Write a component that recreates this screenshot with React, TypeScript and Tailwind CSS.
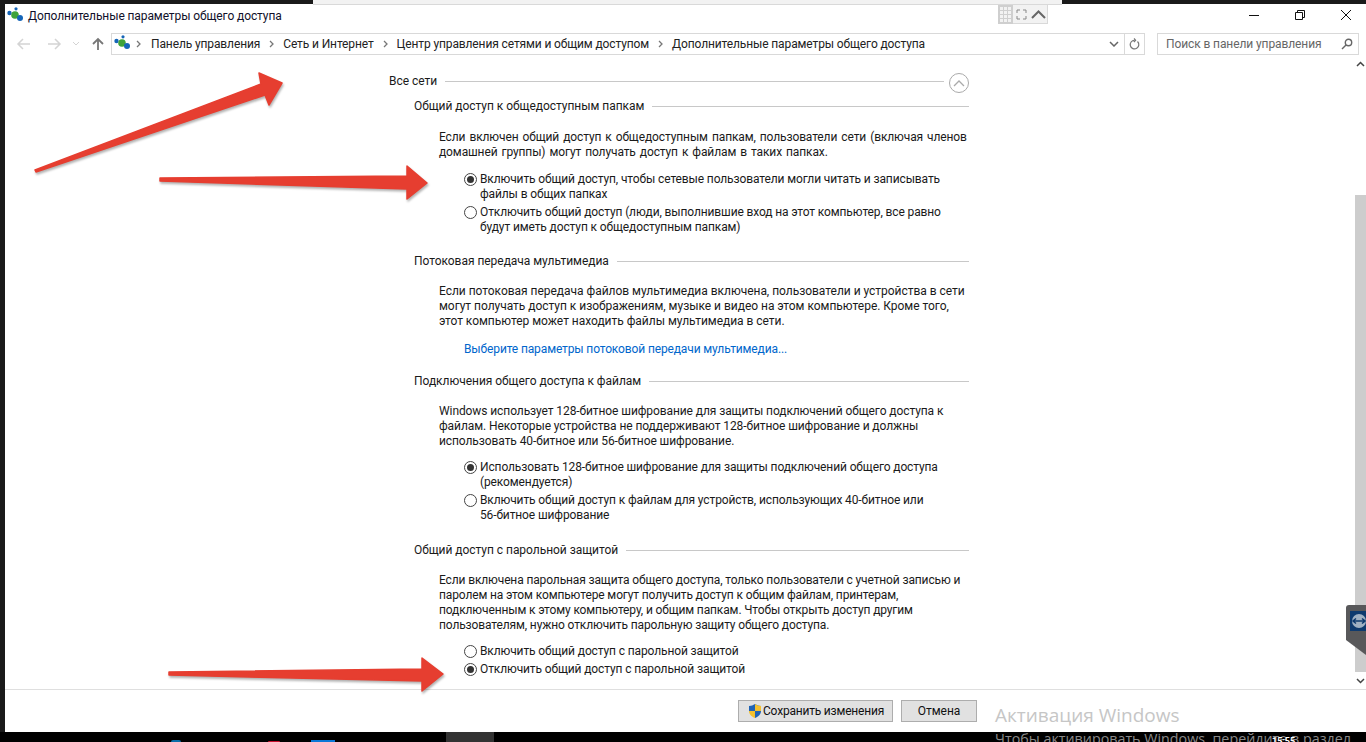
const font = "font-['Roboto','Noto_Sans',sans-serif]";

function NetIcon({ className }: { className?: string }) {
  return (
    <svg viewBox="0 0 16 16" className={className}>
      <circle cx="2.5" cy="6" r="2.2" fill="#1565b8" />
      <circle cx="9" cy="1.8" r="1.6" fill="#1565b8" />
      <circle cx="8" cy="8" r="3.8" fill="#3fa33a" />
      <circle cx="13" cy="11" r="3" fill="#1565b8" />
    </svg>
  );
}

function Heading({ children, big }: { children: string; big?: boolean }) {
  return (
    <div className={`flex items-center gap-[8px] h-[15px] tracking-[-0.04px] ${big ? "" : "ml-[25px]"}`}>
      <span className="whitespace-nowrap">{children}</span>
      <div className={`flex-1 h-px bg-[#c8c8c8] ${big ? "mr-[25px]" : ""}`} />
    </div>
  );
}

function Radio({ checked, children }: { checked?: boolean; children: React.ReactNode }) {
  return (
    <div className="flex ml-[75px]">
      <div className="w-[13px] h-[13px] mt-px rounded-full border border-[#444] bg-white flex items-center justify-center shrink-0">
        {checked && <div className="w-[7px] h-[7px] rounded-full bg-[#333]" />}
      </div>
      <div className="ml-[3px] whitespace-nowrap tracking-[-0.12px]">{children}</div>
    </div>
  );
}

function Arrows() {
  return (
    <svg className="absolute left-0 top-0 pointer-events-none" width="1366" height="742" viewBox="0 0 1366 742">
      <g fill="#e63e30" stroke="#e63e30" strokeWidth="1.5" strokeLinejoin="round" style={{ filter: "drop-shadow(1px 2px 1px rgba(0,0,0,0.3))" }}>
        <polygon points="35,170 261,84 259,73 282,83 269,105 265,95 36,172" />
        <polygon points="160,178 407,176 407,166 427,183 407,199 407,189 160,181" />
        <polygon points="169,672 422,669 422,658 443,674 422,691 422,681 169,675" />
      </g>
    </svg>
  );
}

const crumbs = ["Панель управления", "Сеть и Интернет", "Центр управления сетями и общим доступом", "Дополнительные параметры общего доступа"];

export default function App() {
  return (
    <div className={`relative w-[1366px] h-[742px] overflow-hidden bg-black text-[12px] leading-[15px] text-[#1a1a1a] ${font}`}>
      <div className="flex flex-col h-[732px] bg-[#1a1a1a] pt-[4px] pl-[5px]">
        <div className="flex flex-col flex-1 bg-white min-h-0">
          {/* title bar */}
          <div className="flex items-center h-[24px] shrink-0 pl-[2px]">
            <NetIcon className="w-[16px] h-[16px] -mt-[3px]" />
            <span className="ml-[5px] text-[#10102a] tracking-[-0.1px]">Дополнительные параметры общего доступа</span>
            <div className="flex-1" />
            <div className="flex items-center gap-[16px] pr-[5px] -mt-[2px]">
              <svg width="30" height="12" viewBox="0 0 30 12"><path d="M10 6.500h10" stroke="#111" fill="none" /></svg>
              <svg width="30" height="12" viewBox="0 0 30 12" fill="none" stroke="#111"><path d="M10.500 3.500h7v7h-7zM12.500 3.500v-2h7v7h-2" /></svg>
              <svg width="30" height="12" viewBox="0 0 30 12" fill="none" stroke="#111"><path d="M10 1l10 10M20 1L10 11" /></svg>
            </div>
          </div>
          {/* nav bar */}
          <div className="flex items-center h-[22px] mt-[5px] shrink-0 text-[#333]">
            <div className="flex items-center w-[106px] shrink-0 pl-[11px] text-[#d4d4d4]">
              <svg width="16" height="14" viewBox="0 0 16 14" fill="none" stroke="currentColor" strokeWidth="1.5"><path d="M14 7H2M7 2L2 7l5 5" /></svg>
              <svg className="ml-[14px]" width="16" height="14" viewBox="0 0 16 14" fill="none" stroke="currentColor" strokeWidth="1.5"><path d="M2 7h12M9 2l5 5-5 5" /></svg>
              <svg className="ml-[10px]" width="8" height="6" viewBox="0 0 8 6" fill="none" stroke="currentColor"><path d="M1 1l3 3 3-3" /></svg>
              <svg className="ml-[11px]" width="14" height="14" viewBox="0 0 14 14" fill="none" stroke="#777" strokeWidth="1.8"><path d="M7 13V2M2 7l5-5 5 5" /></svg>
            </div>
            <div className="flex items-center w-[1034px] h-[22px] border border-[#d9d9d9] pl-[2px]">
              <NetIcon className="w-[16px] h-[16px] -mt-[2px]" />
              {crumbs.map((t, i) => (
                <div key={t} className="flex items-center">
                  <svg className={`${i === 0 ? "ml-[6px] mr-[10px]" : "ml-[9px] mr-[9px]"}`} width="5" height="8" viewBox="0 0 5 8" fill="none" stroke="#777" strokeWidth="1.300"><path d="M1 1l3 3-3 3" /></svg>
                  <span className="text-[#222] tracking-[-0.12px]">{t}</span>
                </div>
              ))}
              <div className="flex-1" />
              <svg width="10" height="6" viewBox="0 0 10 6" fill="none" stroke="#666" strokeWidth="1.5"><path d="M1 1l4 4 4-4" /></svg>
              <div className="w-px h-full bg-[#d9d9d9] ml-[5px]" />
              <svg className="mx-[4px]" width="11" height="13" viewBox="0 0 11 13" fill="none" stroke="#777" strokeWidth="1.2"><path d="M8.500 3.500a4.300 4.300 0 1 1-3-1.200M5 0.500l1.600 1.800L5 4" /></svg>
            </div>
            <div className="flex items-center w-[202px] h-[22px] ml-[12px] border border-[#d9d9d9] pl-[8px] pr-[5px] text-[#666]">
              <span className="flex-1 tracking-[-0.1px]">Поиск в панели управления</span>
              <svg width="12" height="12" viewBox="0 0 12 12" fill="none" stroke="#666" strokeWidth="1.4"><circle cx="7.500" cy="4.500" r="3.200" /><path d="M5 7l-4 4" /></svg>
            </div>
          </div>
          {/* content + scrollbar */}
          <div className="flex flex-1 min-h-0">
            <div className="flex-1 pl-[384px] pt-[19px] min-w-0">
              <div className="w-[580px] relative">
                <Heading big>Все сети</Heading>
                <div className="absolute right-0 top-[-1px] w-[20px] h-[20px] rounded-full border border-[#aaa] flex items-center justify-center">
                  <svg width="12" height="7" viewBox="0 0 12 7" fill="none" stroke="#aaa" strokeWidth="1.3"><path d="M1 6l5-5 5 5" /></svg>
                </div>
                <div className="mt-[10px]"><Heading>Общий доступ к общедоступным папкам</Heading></div>
                <p className="ml-[50px] mt-[16px] whitespace-nowrap tracking-[-0.12px] [word-spacing:1.2px]">Если включен общий доступ к общедоступным папкам, пользователи сети (включая членов<br />домашней группы) могут получать доступ к файлам в таких папках.</p>
                <div className="mt-[12px]"><Radio checked>Включить общий доступ, чтобы сетевые пользователи могли читать и записывать<br />файлы в общих папках</Radio></div>
                <div className="mt-[3px]"><Radio>Отключить общий доступ (люди, выполнившие вход на этот компьютер, все равно<br />будут иметь доступ к общедоступным папкам)</Radio></div>
                <div className="mt-[19px]"><Heading>Потоковая передача мультимедиа</Heading></div>
                <p className="ml-[50px] mt-[15px] whitespace-nowrap tracking-[-0.03px]">Если потоковая передача файлов мультимедиа включена, пользователи и устройства в сети<br />могут получать доступ к изображениям, музыке и видео на этом компьютере. Кроме того,<br />этот компьютер может находить файлы мультимедиа в сети.</p>
                <div className="ml-[75px] mt-[13px] text-[#0066cc] tracking-[-0.13px]">Выберите параметры потоковой передачи мультимедиа...</div>
                <div className="mt-[17px]"><Heading>Подключения общего доступа к файлам</Heading></div>
                <p className="ml-[50px] mt-[15px] whitespace-nowrap tracking-[-0.09px]">Windows использует 128-битное шифрование для защиты подключений общего доступа к<br />файлам. Некоторые устройства не поддерживают 128-битное шифрование и должны<br />использовать 40-битное или 56-битное шифрование.</p>
                <div className="mt-[11px]"><Radio checked>Использовать 128-битное шифрование для защиты подключений общего доступа<br />(рекомендуется)</Radio></div>
                <div className="mt-[3px]"><Radio>Включить общий доступ к файлам для устройств, использующих 40-битное или<br />56-битное шифрование</Radio></div>
                <div className="mt-[20px]"><Heading>Общий доступ с парольной защитой</Heading></div>
                <p className="ml-[50px] mt-[15px] whitespace-nowrap tracking-[-0.13px]">Если включена парольная защита общего доступа, только пользователи с учетной записью и<br />паролем на этом компьютере могут получить доступ к общим файлам, принтерам,<br />подключенным к этому компьютеру, и общим папкам. Чтобы открыть доступ другим<br />пользователям, нужно отключить парольную защиту общего доступа.</p>
                <div className="mt-[11px]"><Radio>Включить общий доступ с парольной защитой</Radio></div>
                <div className="mt-[3px]"><Radio checked>Отключить общий доступ с парольной защитой</Radio></div>
              </div>
            </div>
            <div className="flex flex-col w-[11px] shrink-0">
              <div className="h-[17px] flex items-center justify-center">
                <svg width="9" height="6" viewBox="0 0 9 6" fill="none" stroke="#444" strokeWidth="1.5"><path d="M1 5l3.500-3.500L8 5" /></svg>
              </div>
              <div className="h-[123px]" />
              <div className="flex-1 bg-[#cdcdcd]" />
              <div className="h-[17px] flex items-center justify-center">
                <svg width="9" height="6" viewBox="0 0 9 6" fill="none" stroke="#444" strokeWidth="1.5"><path d="M1 1l3.500 3.500L8 1" /></svg>
              </div>
            </div>
          </div>
          {/* footer */}
          <div className="flex items-start justify-end h-[43px] shrink-0 border-t border-[#dfdfdf] pr-[389px] pt-[10px]">
            <button className="flex items-center h-[22px] w-[155px] border border-[#adadad] bg-[#e1e1e1] pl-[8px] text-[#111]">
              <svg width="16" height="16" viewBox="0 0 16 16" className="shrink-0">
                <path d="M8 1c2 1.300 3.500 1.800 6 2v5c0 3.500-2.500 5.500-6 7V8H2V3c2.500-.2 4-.7 6-2z" fill="#1f63b5" />
                <path d="M8 1v7H2c0 3.500 2.500 5.500 6 7V8h6V3c-2.500-.2-4-.7-6-2z" fill="#f3c02e" />
              </svg>
              <span className="whitespace-nowrap tracking-[-0.2px]">Сохранить изменения</span>
            </button>
            <button className="h-[22px] w-[76px] ml-[8px] border border-[#adadad] bg-[#e1e1e1] text-[#111]">Отмена</button>
          </div>
        </div>
      </div>

      {/* top panel peeking over the window */}
      <div className="absolute left-[313px] top-0 w-[749px] h-[5px] bg-[#f2f2f2] border-b border-[#d9d9d9]" />
      <div className="absolute left-[998px] top-[5px] w-[50px] h-[19px] bg-[#f2f2f2] border-r border-b border-[#d9d9d9] flex items-center">
        <div className="w-[15px] h-[19px] bg-[#cfcfcf] grid grid-cols-3 gap-px p-[2px]">
          {Array.from({ length: 12 }).map((_, i) => <div key={i} className="bg-[#f2f2f2]" />)}
        </div>
        <svg className="ml-[3px]" width="11" height="11" viewBox="0 0 11 11" fill="none" stroke="#888"><path d="M1 4V1h3M7 1h3v3M10 7v3H7M4 10H1V7" /></svg>
        <svg className="ml-[4px]" width="15" height="9" viewBox="0 0 15 9" fill="none" stroke="#666" strokeWidth="2"><path d="M1 8l6.500-6.500L14 8" /></svg>
      </div>

      <Arrows />

      {/* teamviewer tab */}
      <div className="absolute left-[1346px] top-[605px] w-[20px] h-[50px] bg-[#58585a] rounded-tl-[3px] [clip-path:polygon(0_0,100%_0,100%_100%,0_70%)] flex items-start">
        <div className="mt-[6px] ml-[4px] w-[16px] h-[20px] bg-[#0e3a6e] flex items-center justify-center">
          <svg width="16" height="16" viewBox="0 0 16 16"><circle cx="9" cy="8" r="7" fill="#9fb0c2" /><path d="M3 8h12M6 5.500L3 8l3 2.500M12 5.500L15 8l-3 2.500" stroke="#0e3a6e" strokeWidth="1.500" fill="none" /></svg>
        </div>
      </div>

      {/* taskbar bits */}
      <div className="absolute left-[446px] top-[732px] w-[48px] h-[10px] bg-[#333]" />
      <div className="absolute left-[311px] top-[740px] w-[24px] h-[2px] bg-[#0a78d7]" />
      <div className="absolute left-[268px] top-[741px] w-[12px] h-[1px] rounded-t-full bg-[#c8102e]" />
      <div className="absolute left-[171px] top-[740px] w-[10px] h-[2px] rounded-t-full bg-[#0a6ea8]" />

      {/* activation watermark */}
      <div className="absolute left-[995px] top-[703px] font-['Open_Sans',sans-serif] text-[19px] leading-[24px] text-[#c6c6c6] whitespace-nowrap">Активация Windows</div>
      <div className="absolute left-[995px] top-[730px] font-['Open_Sans',sans-serif] text-[14.3px] leading-[18px] text-[#8a8a8a] whitespace-nowrap">Чтобы активировать Windows, перейдите в раздел</div>
      <div className="absolute left-[1272px] top-[737px] text-[9px] leading-[9px] text-white font-bold">15:55</div>
    </div>
  );
}
